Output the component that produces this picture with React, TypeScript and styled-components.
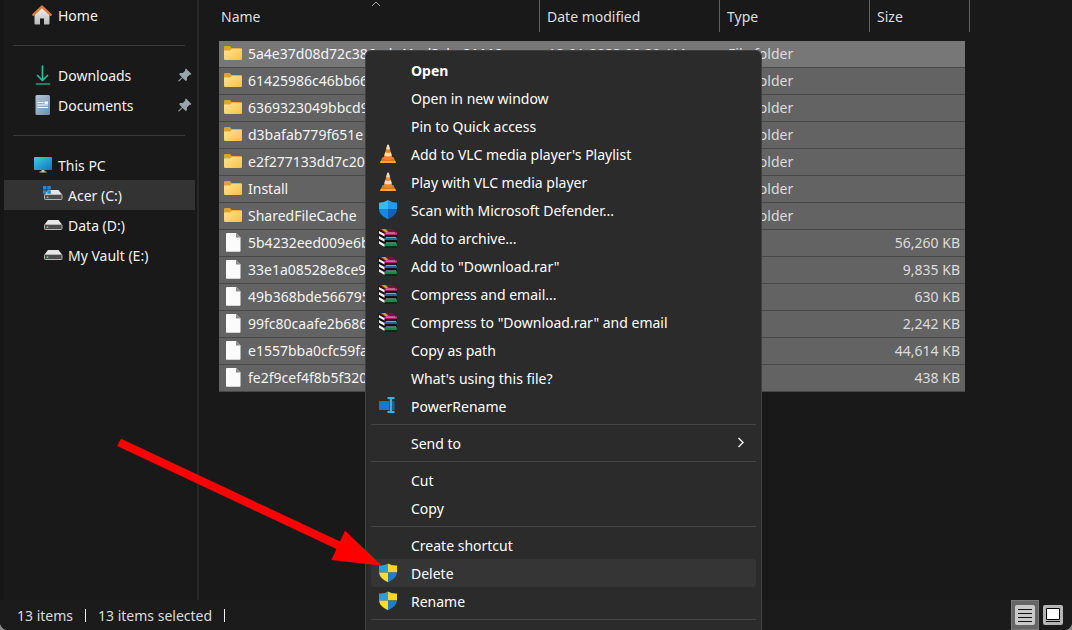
import React from "react";
import styled, { createGlobalStyle } from "styled-components";

const GlobalStyle = createGlobalStyle`
  * { box-sizing: border-box; }
  body {
    margin: 0;
    background: #8a8a8a;
    color: #f2f2f2;
    font-family: "Noto Sans", "Open Sans", sans-serif;
    font-size: 14px;
    line-height: 20px;
  }
  button { font: inherit; color: inherit; }
`;

const Window = styled.div`
  position: relative;
  display: flex;
  flex-direction: column;
  height: 100vh;
  overflow: hidden;
  background: #191919;
  border-radius: 0 0 8px 8px;
`;

const Body = styled.div`
  display: flex;
  flex: 1;
  min-height: 0;
`;

const Sidebar = styled.nav`
  flex: 0 0 199px;
  padding-right: 2px;
  border-left: 4px solid #161616;
  border-right: 2px solid #262626;
`;

const NavLink = styled.a<{ $nested?: boolean; $active?: boolean }>`
  display: flex;
  align-items: center;
  gap: ${(p) => (p.$nested ? 5 : 6)}px;
  height: 30px;
  padding: 0 3px 0 ${(p) => (p.$nested ? 39 : 28)}px;
  background: ${(p) => (p.$active ? "#333333" : "transparent")};
  color: inherit;
  text-decoration: none;
  white-space: nowrap;

  & > span { flex: 1; padding-top: 2px; }
`;

const NavRule = styled.hr`
  height: 1px;
  margin: 15px 10px 14px 9px;
  border: 0;
  background: #3c3c3c;
`;

const Files = styled.main`
  flex: 1;
  min-width: 0;
  padding-left: 20px;
  overflow: hidden;
`;

const Table = styled.table`
  width: 751px;
  table-layout: fixed;
  border-collapse: separate;
  border-spacing: 0;
  white-space: nowrap;
`;

const HeadCell = styled.th<{ $width: number }>`
  position: relative;
  width: ${(p) => p.$width}px;
  height: 32px;
  padding: 2px 8px 0 7px;
  border-right: 1px solid #626262;
  color: #dedede;
  font-weight: 400;
  text-align: left;

  &:first-child { padding-left: 2px; }
`;

const SortMark = styled.svg`
  position: absolute;
  top: 0;
  left: 152px;
`;

const Spacer = styled.tbody`
  td { height: 9px; padding: 0; }
`;

const Row = styled.tr<{ $focused?: boolean }>`
  td {
    height: 27px;
    padding: 0 8px 2px;
    overflow: hidden;
    background: ${(p) => (p.$focused ? "#777777" : "#636363")};
    background-clip: padding-box;
    box-shadow: inset 0 -1px #484848;
    color: #dcdcdc;
  }
  td:first-child { padding-left: 5px; color: #f4f4f4; }
  td:last-child {
    padding-right: 5px;
    border-right: 5px solid transparent;
    text-align: right;
  }
`;

const NameCell = styled.div`
  display: flex;
  align-items: center;
  gap: 6px;
`;

const StatusBar = styled.footer`
  display: flex;
  align-items: center;
  height: 30px;
  padding: 0 8px 0 17px;
  background: #1b1b1b;
  color: #dcdcdc;
`;

const StatusText = styled.span`
  margin-right: 12px;
  padding: 2px 13px 0 0;
  background: linear-gradient(#f0f0f0, #f0f0f0) right center / 1px 13px no-repeat;
`;

const Views = styled.div`
  display: flex;
  align-items: center;
  gap: 3px;
  margin-left: auto;
`;

const ViewButton = styled.button<{ $on?: boolean }>`
  display: flex;
  align-items: center;
  justify-content: center;
  width: ${(p) => (p.$on ? 28 : 22)}px;
  height: 30px;
  padding: 0;
  border: ${(p) => (p.$on ? "1px solid #7a7a7a" : "0")};
  background: ${(p) => (p.$on ? "#666666" : "transparent")};
`;

const Menu = styled.div`
  position: absolute;
  top: 50px;
  bottom: 0;
  left: 365px;
  width: 397px;
  padding: 5px;
  overflow: hidden;
  background: #2b2b2b;
  border: 1px solid #414141;
  border-bottom: 0;
  border-radius: 6px 6px 0 0;
`;

const MenuButton = styled.button<{ $bold?: boolean; $hover?: boolean }>`
  display: grid;
  grid-template-columns: 20px 1fr 20px;
  column-gap: 13px;
  align-items: center;
  width: 100%;
  height: 28px;
  padding: 0 5px 0 7px;
  border: 0;
  border-radius: 3px;
  background: ${(p) => (p.$hover ? "#353535" : "transparent")};
  color: #ffffff;
  font-weight: ${(p) => (p.$bold ? 700 : 400)};
  text-align: left;
  white-space: nowrap;

  & > svg { display: block; }
`;

const MenuLabel = styled.span`
  padding-top: 2px;
`;

const MenuRule = styled.hr`
  height: 1px;
  margin: 4px 0;
  border: 0;
  background: #454545;
`;

const Pointer = styled.svg`
  position: absolute;
  top: 436px;
  left: 115px;
  pointer-events: none;
`;

const HomeIcon = () => (
  <svg width="20" height="22" viewBox="0 0 20 22" aria-hidden="true">
    <defs>
      <linearGradient id="homeWall" x2="0" y2="1">
        <stop stopColor="#f4f4f4" /><stop offset="1" stopColor="#b9b9b9" />
      </linearGradient>
    </defs>
    <path d="M2.500 10 10 3l7.500 7v9.500a1 1 0 0 1-1 1H12V14.500H8v6H3.500a1 1 0 0 1-1-1Z" fill="url(#homeWall)" />
    <path d="M1.300 10.800 10 2.600l8.700 8.200" fill="none" stroke="#e07b35" strokeWidth="2.400" strokeLinecap="round" strokeLinejoin="round" />
  </svg>
);

const DownloadIcon = () => (
  <svg width="20" height="20" viewBox="0 0 20 20" fill="none" strokeWidth="1.700" strokeLinecap="round" strokeLinejoin="round" aria-hidden="true">
    <path d="M10.500 1v14M5.500 10.500l5 5 5-5" stroke="#2fbb9a" />
    <path d="M4.500 19h13" stroke="#299e83" />
  </svg>
);

const DocumentIcon = () => (
  <svg width="20" height="20" viewBox="0 0 20 20" aria-hidden="true">
    <defs>
      <linearGradient id="docPage" x2="1" y2="1">
        <stop stopColor="#b3c6d8" /><stop offset="1" stopColor="#6f8cab" />
      </linearGradient>
    </defs>
    <rect x="3.500" width="14.500" height="20" rx="1.500" fill="url(#docPage)" />
    <path d="M5.500 7.500h6M5.500 10h10.500M5.500 12.500h10.500" stroke="#fff" strokeWidth="1.200" />
    <path d="M12.500 6.500h3.500v2.300h-3.500z" fill="#fff" />
  </svg>
);

const PinIcon = () => (
  <svg width="14" height="14" viewBox="0 0 14 14" aria-hidden="true">
    <path d="M8 .6 13.400 6l-1 1-.8-.2-2.500 2.500-.2 2.900-1.200.8-3.100-3.100L1 13.500l-.7-.1.100-.8L4 9.200 1.100 6.300 2 5.100l2.900-.2 2.400-2.500L7 1.500Z" fill="#98a4ab" />
  </svg>
);

const ComputerIcon = () => (
  <svg width="20" height="18" viewBox="0 0 20 18" aria-hidden="true">
    <defs>
      <linearGradient id="screen" x2="1" y2="1">
        <stop stopColor="#3ed0dd" /><stop offset="1" stopColor="#1272c4" />
      </linearGradient>
    </defs>
    <rect x="2" y="1" width="18" height="13" rx=".8" fill="url(#screen)" />
    <path d="M9.500 14h3v1.400h2v1h-7v-1h2z" fill="#bcc5cb" />
  </svg>
);

const DriveIcon = ({ system }: { system?: boolean }) => (
  <svg width="20" height="18" viewBox="0 0 20 18" aria-hidden="true">
    <path d="m5 4 10.500 0 3.500 4.500H1.500z" fill="#e6e6e6" />
    <rect x="1.500" y="8.500" width="17.500" height="5" rx=".8" fill="#4d4d4d" stroke="#b5b5b5" />
    <circle cx="4.500" cy="11.200" r=".9" fill="#55d46b" />
    {system && <path d="M0 0h3.500v3.500H0zM4.300 0h3.500v3.500H4.300zM0 4.300h3.500v3.500H0zM4.300 4.300h3.500v3.500H4.300z" fill="#2c86cc" />}
  </svg>
);

const FolderIcon = () => (
  <svg width="18" height="18" viewBox="0 0 18 18" aria-hidden="true">
    <defs>
      <linearGradient id="folder" x2="1" y2="1">
        <stop stopColor="#ffe394" /><stop offset="1" stopColor="#f4c343" />
      </linearGradient>
    </defs>
    <path d="M0 2.200Q0 1 1.200 1h4.500l2 2h9.100Q18 3 18 4.200V8H0z" fill="#dfa42a" />
    <path d="M0 5.500h6L8 3.700h9q1 0 1 1v9.100q0 1.200-1.200 1.200H1.200Q0 15 0 13.800z" fill="url(#folder)" />
  </svg>
);

const FileIcon = () => (
  <svg width="18" height="20" viewBox="0 0 18 20" aria-hidden="true">
    <path d="M2.500 0H12l4.500 4.500V18q0 .8-.8.8H2.800Q2 18.800 2 18V.5z" fill="#fbfbfb" />
    <path d="M12 0v4.500h4.500z" fill="#8b8b8b" />
  </svg>
);

const ConeIcon = () => (
  <svg width="20" height="20" viewBox="0 0 20 20" aria-hidden="true">
    <path d="M4.500 13h11l2.200 5.200q.2.800-.8.800H3q-1 0-.8-.8z" fill="#dd7712" />
    <path d="M2.600 17h14.800l.5 2H2.100z" fill="#ffa63b" />
    <path d="M9.300.8h1.500l3.800 13.900q-4.600 2.400-9.200 0z" fill="#e8872b" />
    <path d="M9.300.8h1.500l1.100 4.200q-1.900 1-3.700 0zM7.200 8.300q2.900 1.300 5.700 0l.9 3.300q-3.800 1.700-7.500 0z" fill="#ecdccf" />
  </svg>
);

const DefenderIcon = () => (
  <svg width="20" height="20" viewBox="0 0 20 20" aria-hidden="true">
    <path d="M10 0Q14 2.700 19 2.700V9H10z" fill="#219be9" />
    <path d="M10 0Q6 2.700 1 2.700V9h9z" fill="#37b9f3" />
    <path d="M1 9h9v10.200Q1 15 1 9" fill="#1688de" />
    <path d="M19 9h-9v10.200Q19 15 19 9" fill="#1262b8" />
  </svg>
);

const ArchiveIcon = () => (
  <svg width="20" height="20" viewBox="0 0 20 20" aria-hidden="true">
    <path d="M.5 1 6.500 4.500V19.500L1 16zM6 4h13v15.500H6z" fill="#121212" />
    <path d="M.8 1 14 .8 18.500 4H6z" fill="#7d1238" />
    <path d="m3.500 1 4-.1L10.500 4H7z" fill="#d99b2c" />
    <path d="M6.500 5.500H19" stroke="#d92c80" strokeWidth="2.400" />
    <path d="M8 5h9" stroke="#f7a6cc" strokeWidth=".8" />
    <path d="M6.500 10.700H19" stroke="#1f6fa3" strokeWidth="2.400" />
    <path d="M8 9.400h10" stroke="#9fcbe2" strokeWidth=".8" />
    <path d="M6.500 16.700H19" stroke="#0f8a48" strokeWidth="3" />
    <path d="M8 14.900h10" stroke="#8fd6ac" strokeWidth=".8" />
    <path d="m1 3 5.500 3v2.600L1 5.500zM1 8l5.500 3v2.800L1 10.700zM1 13l5.500 3.300v2.700L1 15.700z" fill="#f4f1f2" />
  </svg>
);

const RenameIcon = () => (
  <svg width="20" height="20" viewBox="0 0 20 20" aria-hidden="true">
    <path d="M1 5h10v9H1z" fill="#1778c9" />
    <path d="M14.500 5h2v9h-2z" fill="#1265ad" />
    <path d="M9.500 1h7v2H14.200v12h2.300v2h-7v-2h2.200V3H9.500z" fill="#3caee0" />
  </svg>
);

const ShieldIcon = () => (
  <svg width="20" height="20" viewBox="0 0 20 20" aria-hidden="true">
    <path d="M10 .5Q6 3 1 2.500V9.500h9z" fill="#2d9bdc" />
    <path d="M10 .5q4 2.500 9 2v7h-9z" fill="#fbd626" />
    <path d="M1 9.500h9v9.700Q2 16 1 9.500" fill="#f8dc30" />
    <path d="M19 9.500h-9v9.700Q18 16 19 9.500" fill="#1f7ec5" />
  </svg>
);

type Entry = { label: string; Icon?: React.FC; bold?: boolean; hover?: boolean; more?: boolean };

const menuGroups: Entry[][] = [
  [
    { label: "Open", bold: true },
    { label: "Open in new window" },
    { label: "Pin to Quick access" },
    { label: "Add to VLC media player's Playlist", Icon: ConeIcon },
    { label: "Play with VLC media player", Icon: ConeIcon },
    { label: "Scan with Microsoft Defender...", Icon: DefenderIcon },
    { label: "Add to archive...", Icon: ArchiveIcon },
    { label: 'Add to "Download.rar"', Icon: ArchiveIcon },
    { label: "Compress and email...", Icon: ArchiveIcon },
    { label: 'Compress to "Download.rar" and email', Icon: ArchiveIcon },
    { label: "Copy as path" },
    { label: "What's using this file?" },
    { label: "PowerRename", Icon: RenameIcon },
  ],
  [{ label: "Send to", more: true }],
  [{ label: "Cut" }, { label: "Copy" }],
  [
    { label: "Create shortcut" },
    { label: "Delete", Icon: ShieldIcon, hover: true },
    { label: "Rename", Icon: ShieldIcon },
  ],
];

const files = [
  { name: "5a4e37d08d72c386adc41ed3cbe01110", date: "18-01-2023 09:20 AM" },
  { name: "61425986c46bb66" },
  { name: "6369323049bbcd9" },
  { name: "d3bafab779f651e" },
  { name: "e2f277133dd7c20" },
  { name: "Install" },
  { name: "SharedFileCache" },
  { name: "5b4232eed009e6b", size: "56,260 KB" },
  { name: "33e1a08528e8ce9", size: "9,835 KB" },
  { name: "49b368bde566795", size: "630 KB" },
  { name: "99fc80caafe2b686", size: "2,242 KB" },
  { name: "e1557bba0cfc59fa", size: "44,614 KB" },
  { name: "fe2f9cef4f8b5f320", size: "438 KB" },
];

export default function App() {
  return (
    <>
      <GlobalStyle />
      <Window>
        <Body>
          <Sidebar aria-label="Locations">
            <NavLink href="#home"><HomeIcon /><span>Home</span></NavLink>
            <NavRule />
            <NavLink href="#downloads"><DownloadIcon /><span>Downloads</span><PinIcon /></NavLink>
            <NavLink href="#documents"><DocumentIcon /><span>Documents</span><PinIcon /></NavLink>
            <NavRule />
            <NavLink href="#pc"><ComputerIcon /><span>This PC</span></NavLink>
            <NavLink href="#c" $nested $active><DriveIcon system /><span>Acer (C:)</span></NavLink>
            <NavLink href="#d" $nested><DriveIcon /><span>Data (D:)</span></NavLink>
            <NavLink href="#e" $nested><DriveIcon /><span>My Vault (E:)</span></NavLink>
          </Sidebar>
          <Files>
            <Table>
              <thead>
                <tr>
                  <HeadCell $width={321}>
                    Name
                    <SortMark width="10" height="8" viewBox="0 0 10 8" fill="none" aria-hidden="true">
                      <path d="m1 6 4-4 4 4" stroke="#a8a8a8" />
                    </SortMark>
                  </HeadCell>
                  <HeadCell $width={180}>Date modified</HeadCell>
                  <HeadCell $width={150}>Type</HeadCell>
                  <HeadCell $width={100}>Size</HeadCell>
                </tr>
              </thead>
              <Spacer aria-hidden="true"><tr><td colSpan={4} /></tr></Spacer>
              <tbody>
                {files.map((f, i) => (
                  <Row key={f.name} $focused={i === 0}>
                    <td>
                      <NameCell>{f.size ? <FileIcon /> : <FolderIcon />}{f.name}</NameCell>
                    </td>
                    <td>{f.date}</td>
                    <td>{f.size ? "" : "File folder"}</td>
                    <td>{f.size}</td>
                  </Row>
                ))}
              </tbody>
            </Table>
          </Files>
        </Body>
        <StatusBar>
          <StatusText>13 items</StatusText>
          <StatusText>13 items selected</StatusText>
          <Views>
            <ViewButton $on aria-label="Details view">
              <svg width="20" height="20" viewBox="0 0 20 20" aria-hidden="true">
                <rect width="20" height="20" rx="2" fill="#c9c9c9" />
                <path d="M3 4.500h14M3 8.500h14M3 12.500h14M3 16.500h14" stroke="#111" />
              </svg>
            </ViewButton>
            <ViewButton aria-label="Large icons view">
              <svg width="20" height="20" viewBox="0 0 20 20" aria-hidden="true">
                <rect width="20" height="20" rx="2" fill="#b5b5b5" />
                <path d="M3.500 3.500h13v11h-13z" fill="#fff" stroke="#000" />
                <path d="M3 16.500h14" stroke="#111" />
              </svg>
            </ViewButton>
          </Views>
        </StatusBar>
        <Menu role="menu">
          {menuGroups.map((group, g) => (
            <React.Fragment key={g}>
              {group.map(({ label, Icon, bold, hover, more }) => (
                <MenuButton key={label} role="menuitem" $bold={bold} $hover={hover}>
                  {Icon ? <Icon /> : <span />}
                  <MenuLabel>{label}</MenuLabel>
                  {more && (
                    <svg width="20" height="20" viewBox="0 0 20 20" fill="none" aria-hidden="true">
                      <path d="m7.500 5 4.500 4.500L7.500 14" stroke="#e8e8e8" strokeWidth="1.500" />
                    </svg>
                  )}
                </MenuButton>
              ))}
              <MenuRule />
            </React.Fragment>
          ))}
        </Menu>
        <Pointer width="270" height="132" viewBox="115 436 270 132" aria-hidden="true">
          <path d="M121 438.700 340 541.500 345 530.700 382 565.700 331.300 560 336.500 549 117.200 446z" fill="#ff0000" />
        </Pointer>
      </Window>
    </>
  );
}
